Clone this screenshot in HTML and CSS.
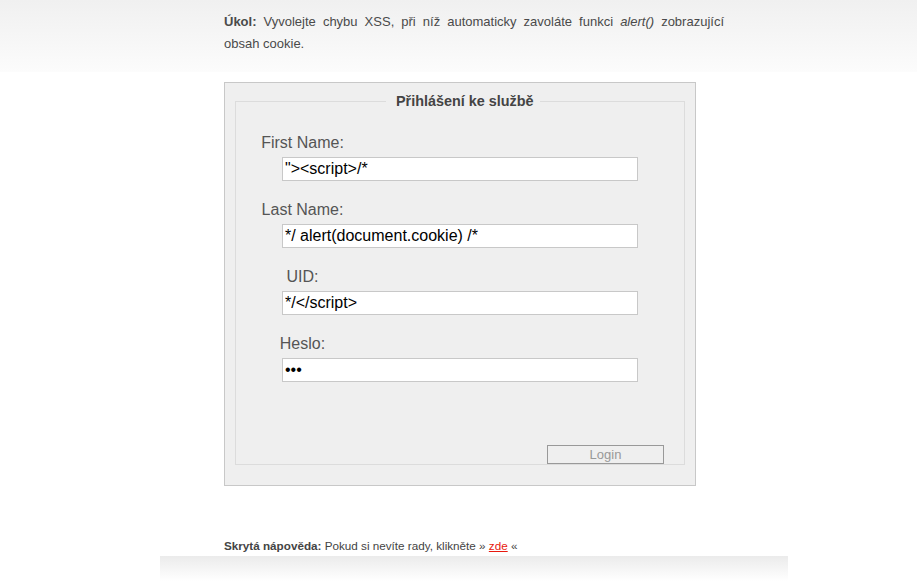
FILE: index.html
```html
<!DOCTYPE html>
<html lang="cs">
<head>
<meta charset="utf-8">
<title>XSS</title>
<link rel="stylesheet" href="styles.css">
</head>
<body>
<div class="header">
  <div class="page">
    <p class="task"><b>Úkol:</b> Vyvolejte chybu XSS, při níž automaticky zavoláte funkci <i>alert()</i> zobrazující obsah cookie.</p>
  </div>
</div>
<div class="page">
  <div class="box">
    <form class="form">
      <fieldset class="fs">
        <legend class="legend">Přihlášení ke službě</legend>
        <div class="row">
          <label class="label">First Name:</label>
          <input class="input" type="text" value="&quot;&gt;&lt;script&gt;/*">
        </div>
        <div class="row">
          <label class="label">Last Name:</label>
          <input class="input" type="text" value="*/ alert(document.cookie) /*">
        </div>
        <div class="row">
          <label class="label">UID:</label>
          <input class="input" type="text" value="*/&lt;/script&gt;">
        </div>
        <div class="row">
          <label class="label">Heslo:</label>
          <input class="input" type="password" value="abc">
        </div>
        <div class="actions">
          <button class="btn" type="button">Login</button>
        </div>
      </fieldset>
    </form>
  </div>
  <p class="hint"><b>Skrytá nápověda:</b> Pokud si nevíte rady, klikněte » <a class="link" href="#">zde</a> «</p>
</div>
<div class="footer"></div>
</body>
</html>
```
FILE: styles.css
```css
html, body {
  margin: 0;
  padding: 0;
  background: #fff;
  font-family: "Liberation Sans", Arial, sans-serif;
  color: #444;
}
.header {
  height: 72px;
  background: linear-gradient(#f0f0f0, #fcfcfc);
}
.page {
  width: 500px;
  margin-left: 224px;
}
.task {
  margin: 0;
  padding-top: 11px;
  font-size: 13px;
  line-height: 22px;
  text-align: justify;
  color: #4a4a4a;
}
.box {
  margin-top: 10px;
  width: 450px;
  height: 402px;
  border: 1px solid #c8c8c8;
  background: #efefef;
  padding: 0 10px;
}
.form {
  margin: 0;
  padding-top: 10px;
}
.fs {
  margin: 0;
  border: 1px solid #dcdcdc;
  padding: 25px 0 0 0;
  height: 372px;
  box-sizing: border-box;
  display: flex;
  flex-direction: column;
}
.legend {
  margin: 0 0 0 150px;
  padding: 0 6px 0 10px;
  font-size: 14.4px;
  font-weight: bold;
  color: #444;
  line-height: 16px;
}
.row {
  display: flex;
  flex-direction: column;
  margin-bottom: 20px;
}
.label {
  width: 119px;
  margin-left: 7px;
  text-align: center;
  white-space: nowrap;
  font-size: 16px;
  line-height: 18px;
  color: #555;
  margin-bottom: 5px;
}
.input {
  margin: 0 0 0 46px;
  width: 356px;
  height: 24px;
  box-sizing: border-box;
  border: 1px solid #c8c8c8;
  background: #fff;
  padding: 0 2px;
  font-family: "Liberation Sans", Arial, sans-serif;
  font-size: 16px;
  color: #000;
  outline: none;
}
.actions {
  margin-top: auto;
  display: flex;
  justify-content: flex-end;
  padding-right: 20px;
}
.btn {
  width: 117px;
  height: 19px;
  border: 1px solid #999;
  background: #efefef;
  color: #999;
  font-family: "Liberation Sans", Arial, sans-serif;
  font-size: 13px;
  padding: 0;
  line-height: 17px;
  margin-bottom: 0;
}
.hint {
  margin: 53px 0 0 0;
  font-size: 11.7px;
  line-height: 14px;
  color: #444;
}
.link {
  color: #e8190f;
  text-decoration: underline;
}
.footer {
  width: 628px;
  height: 25px;
  margin-left: 160px;
  margin-top: 3px;
  background: linear-gradient(#ebebeb, #fff);
}
```
